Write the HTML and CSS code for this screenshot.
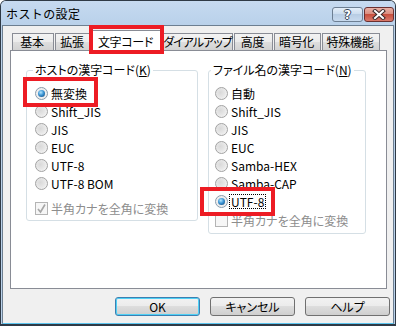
FILE: index.html
```html
<!DOCTYPE html>
<html lang="ja">
<head>
    <meta charset="utf-8">
    <title>ホストの設定</title>
    <link rel="stylesheet" href="styles.css">
</head>
<body>
    <div class="window">
        <div class="titlebar">
            <span class="title">ホストの設定</span>
            <div class="caption-buttons">
                <span class="cap-btn help-btn">?</span>
                <span class="cap-btn close-btn">
                    <svg width="14" height="11" viewBox="0 0 14 11">
                        <path d="M3 2 L11 9 M11 2 L3 9" stroke="#3a2a2a" stroke-width="4" stroke-linecap="square"/>
                        <path d="M3 2 L11 9 M11 2 L3 9" stroke="#fff" stroke-width="2" stroke-linecap="square"/>
                    </svg>
                </span>
            </div>
        </div>

        <div class="client">
            <div class="tabs">
                <div class="tab">基本</div>
                <div class="tab">拡張</div>
                <div class="tab active">文字コード</div>
                <div class="tab">ダイアルアップ</div>
                <div class="tab">高度</div>
                <div class="tab">暗号化</div>
                <div class="tab">特殊機能</div>
            </div>

            <div class="panel">
                <fieldset class="group group-host">
                    <legend>ホストの漢字コード(<u>K</u>)</legend>
                    <div class="option"><span class="radio checked"></span>無変換</div>
                    <div class="option"><span class="radio"></span>Shift_JIS</div>
                    <div class="option"><span class="radio"></span>JIS</div>
                    <div class="option"><span class="radio"></span>EUC</div>
                    <div class="option"><span class="radio"></span>UTF-8</div>
                    <div class="option"><span class="radio"></span>UTF-8 BOM</div>
                    <div class="option check-row disabled">
                        <span class="checkbox">
                            <svg width="11" height="11" viewBox="0 0 11 11">
                                <path d="M2 6 L4.5 9 L9 1.5" fill="none" stroke="#a6a6a6" stroke-width="1.6"/>
                            </svg>
                        </span>半角カナを全角に変換
                    </div>
                </fieldset>

                <fieldset class="group group-file">
                    <legend>ファイル名の漢字コード(<u>N</u>)</legend>
                    <div class="option"><span class="radio"></span>自動</div>
                    <div class="option"><span class="radio"></span>Shift_JIS</div>
                    <div class="option"><span class="radio"></span>JIS</div>
                    <div class="option"><span class="radio"></span>EUC</div>
                    <div class="option"><span class="radio"></span>Samba-HEX</div>
                    <div class="option"><span class="radio"></span>Samba-CAP</div>
                    <div class="option"><span class="radio checked"></span><span class="focus">UTF-8</span></div>
                    <div class="option check-row disabled"><span class="checkbox"></span>半角カナを全角に変換</div>
                </fieldset>
            </div>

            <div class="dialog-buttons">
                <button class="btn default">OK</button>
                <button class="btn">キャンセル</button>
                <button class="btn">ヘルプ</button>
            </div>
        </div>

        <!-- red annotation frames -->
        <div class="mark mark-tab"></div>
        <div class="mark mark-host"></div>
        <div class="mark mark-file"></div>
    </div>
</body>
</html>
```

FILE: styles.css
```css
body {
    margin: 0;
    background: #fff;
    font-family: "Noto Sans CJK JP", "Noto Sans", sans-serif;
    font-size: 12px;
    font-feature-settings: "palt" 1;
    color: #000;
}

.window {
    position: relative;
    width: 396px;
    height: 326px;
    box-sizing: border-box;
    border: 1px solid #2f3a46;
    border-bottom-width: 2px;
    border-radius: 6px 6px 0 0;
    background: #b9d1ea;
    display: flex;
    flex-direction: column;
}

.titlebar {
    flex: none;
    height: 24px;
    display: flex;
    justify-content: space-between;
    padding: 0 1px 0 5px;
    background: linear-gradient(#c6daf0, #b9d1ea);
    border-radius: 5px 5px 0 0;
}

.title {
    line-height: 25px;
    font-size: 12px;
    letter-spacing: 0.4px;
    font-feature-settings: normal;
}

.caption-buttons {
    display: flex;
    gap: 1px;
    margin-top: 6px;
    height: 15px;
}

.cap-btn {
    box-sizing: border-box;
    height: 15px;
    border-radius: 3px;
    display: flex;
    align-items: center;
    justify-content: center;
}

.help-btn {
    width: 31px;
    border: 1px solid #6d7f93;
    background: linear-gradient(#e4eef9, #c9dbee 50%, #b8cde4 50%, #c8daee);
    color: #fff;
    font-family: "DejaVu Sans", sans-serif;
    font-weight: bold;
    font-size: 12px;
    text-shadow: 1px 0 0 #39485a, -1px 0 0 #39485a, 0 1px 0 #39485a, 0 -1px 0 #39485a;
}

.close-btn {
    width: 30px;
    border: 1px solid #6b3030;
    background: linear-gradient(#e9b1a6, #d88a7c 50%, #c7503e 50%, #d9796b);
}

.client {
    flex: 1;
    margin: 0 1px;
    padding: 0 6px 0 7px;
    background: #f0f0f0;
    border: 1px solid #6d7f91;
    border-bottom: 1px solid #5cc4ee;
    display: flex;
    flex-direction: column;
}

/* tab strip */
.tabs {
    display: flex;
    align-items: flex-end;
    gap: 1px;
    height: 21px;
    margin: 4px 0 -1px 2px;
}

.tab {
    box-sizing: border-box;
    height: 17px;
    margin-bottom: 1px;
    border: 1px solid #898c95;
    border-bottom: none;
    background: linear-gradient(#f3f3f3, #ebebeb 50%, #dedede 50%, #d2d2d2);
    text-align: center;
    line-height: 16px;
    padding-right: 2px;
    white-space: nowrap;
    letter-spacing: -0.3px;
}

.tab:nth-child(1) { width: 42px; }
.tab:nth-child(2) { width: 36px; }
.tab:nth-child(3) { width: 71px; }
.tab:nth-child(4) { width: 71px; letter-spacing: -1px; padding: 0; }
.tab:nth-child(5) { width: 39px; }
.tab:nth-child(6) { width: 47px; }
.tab:nth-child(7) { width: 58px; }

.tab.active {
    position: relative;
    z-index: 1;
    height: 21px;
    margin: 0 -1px;
    background: #fff;
    line-height: 22px;
}

.panel {
    height: 239px;
    box-sizing: border-box;
    background: #fff;
    border: 1px solid #898c95;
    padding: 12px 0 0 15px;
    display: flex;
    align-items: flex-start;
    gap: 10px;
}

.group {
    margin: 0;
    min-width: 0;
    box-sizing: border-box;
    border: 1px solid #d5dfe5;
    border-radius: 3px;
}

.group legend {
    padding: 0 2px;
    line-height: 14px;
    color: #000;
}

.group-host {
    width: 172px;
    padding: 7px 4px 3px 8px;
}

.group-host legend {
    margin-left: -2px;
}

.group-file {
    width: 158px;
    padding: 7px 4px 4px 6px;
}

.group-file legend {
    margin-left: -4px;
}

.option {
    display: flex;
    align-items: center;
    gap: 3px;
    height: 18px;
    white-space: nowrap;
}

.radio {
    flex: none;
    width: 13px;
    height: 13px;
    box-sizing: border-box;
    border-radius: 50%;
    border: 1px solid #a2a2a2;
    background: radial-gradient(circle at 40% 40%, #d9d9d9 0, #e6e6e6 45%, #fafafa 100%);
    display: flex;
    align-items: center;
    justify-content: center;
}

.radio.checked {
    border-color: #8a9bab;
    background: radial-gradient(circle, #e4e4e4 0, #f6f6f6 100%);
}

.radio.checked::after {
    content: "";
    width: 7px;
    height: 7px;
    border-radius: 50%;
    background: radial-gradient(circle at 40% 35%, #b5e6ff 0, #3b95d4 45%, #0f3e70 100%);
}

.checkbox {
    flex: none;
    width: 13px;
    height: 13px;
    box-sizing: border-box;
    border: 1px solid #b4b4b4;
    background: #f6f6f6;
    display: flex;
    align-items: center;
    justify-content: center;
}

.check-row.disabled {
    color: #8d8d8d;
}

.group-host .check-row {
    margin-top: 7px;
}

.group-file .check-row {
    margin-top: 1px;
}

.focus {
    border: 1px dotted #000;
    padding: 0 1px;
    margin-left: -2px;
    line-height: 13px;
}

/* OK / cancel / help */
.dialog-buttons {
    display: flex;
    justify-content: flex-end;
    gap: 10px;
    margin: 8px -3px 0 0;
}

.btn {
    width: 85px;
    height: 19px;
    padding: 0;
    font: inherit;
    color: #000;
    border: 1px solid #707070;
    border-radius: 3px;
    background: linear-gradient(#f2f2f2, #ebebeb 50%, #dddddd 50%, #cfcfcf);
}

.btn.default {
    border-color: #3c7fb1;
    box-shadow: inset 0 0 0 1px #4fd0f5;
}

.mark {
    position: absolute;
    box-sizing: border-box;
    border: 4px solid #ed1c24;
    z-index: 2;
}

.mark-tab {
    left: 88px;
    top: 24px;
    width: 75px;
    height: 29px;
}

.mark-host {
    left: 22px;
    top: 76px;
    width: 75px;
    height: 30px;
}

.mark-file {
    left: 199px;
    top: 186px;
    width: 75px;
    height: 29px;
}
```
